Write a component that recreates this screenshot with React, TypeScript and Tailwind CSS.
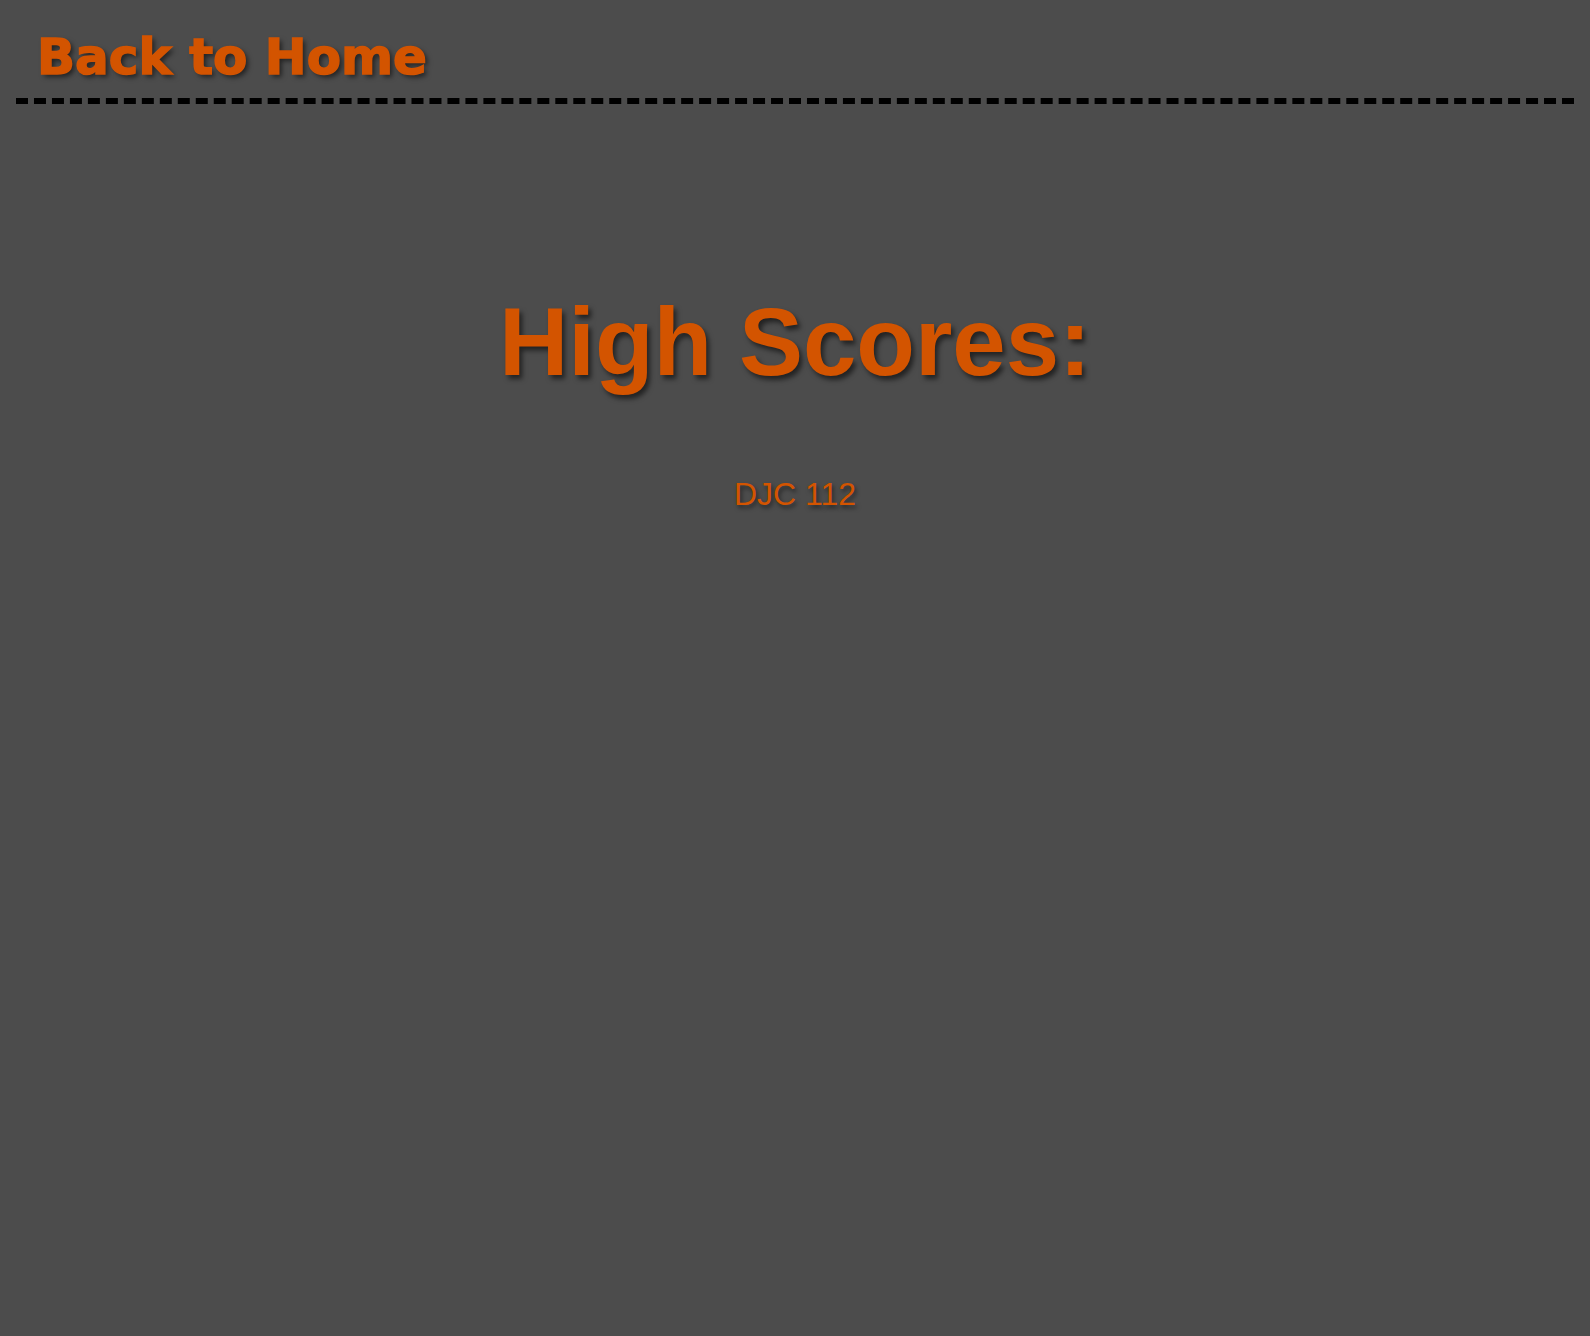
export default function App() {
  return (
    <div className="min-h-[1336px] bg-[#4c4c4c] font-['Liberation_Sans',Arial,sans-serif] text-[#d35400]">
      <div className="mx-4 border-b-[6px] border-dashed border-black pt-[28px] pb-[12px] pl-[21px]">
        <a
          href="#"
          className="block text-[50px] leading-[58px] font-bold font-['DejaVu_Sans',sans-serif] [-webkit-text-stroke:1.5px_#d35400] [text-shadow:3px_3px_5px_rgba(0,0,0,0.55)]"
        >
          Back to Home
        </a>
      </div>
      <div className="flex flex-col items-center">
        <h1 className="mt-[183px] text-[96px] leading-[110px] font-bold [text-shadow:3px_4px_5px_rgba(0,0,0,0.55)]">
          High Scores:
        </h1>
        <p className="mt-[79px] text-[32px] leading-[37px] [text-shadow:2px_3px_4px_rgba(0,0,0,0.5)]">
          DJC 112
        </p>
      </div>
    </div>
  );
}
